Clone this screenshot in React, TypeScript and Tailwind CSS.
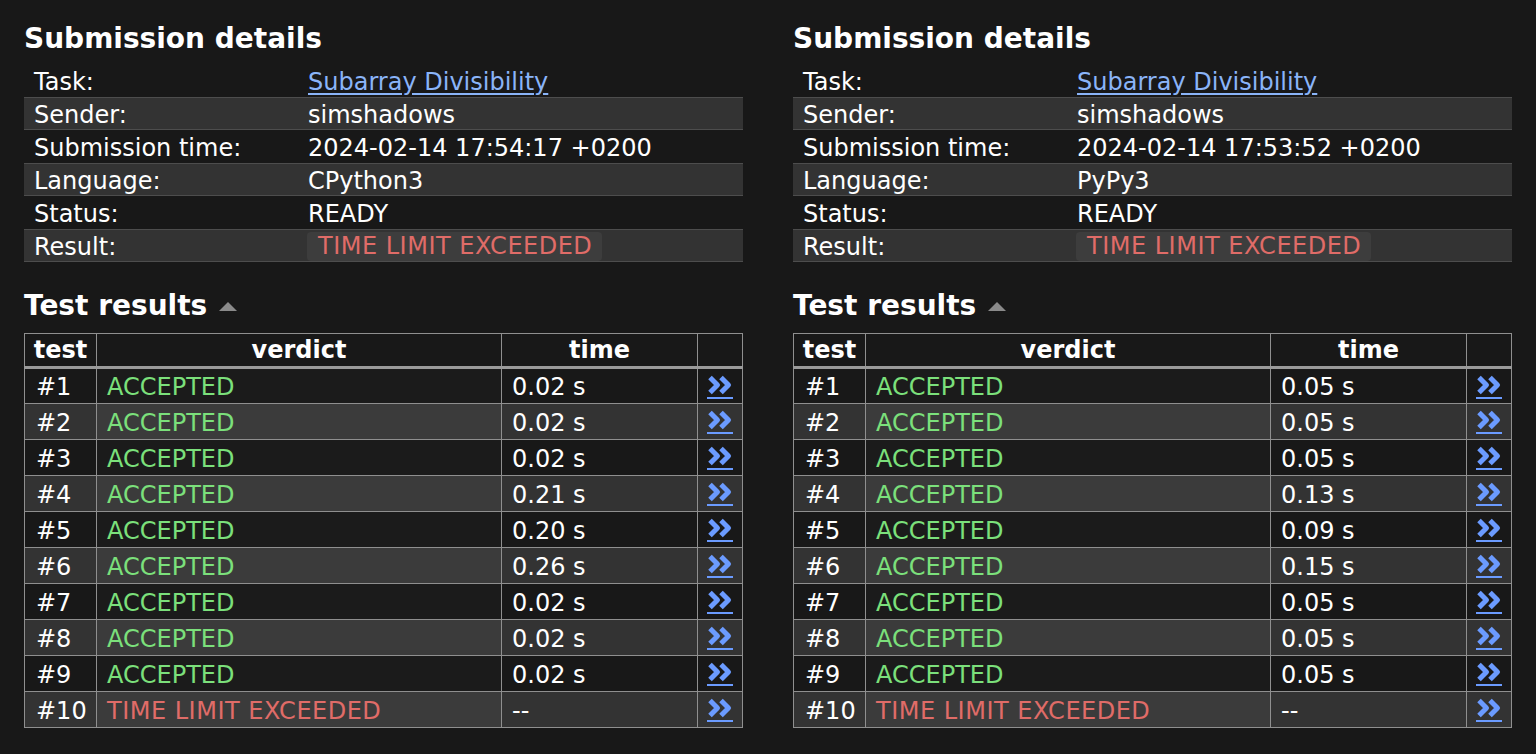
import React from "react";

type Submission = {
  time: string;
  language: string;
  tests: { verdict: string; time: string }[];
};

const ACC = "ACCEPTED";
const TLE = "TIME LIMIT EXCEEDED";

const submissions: Submission[] = [
  {
    time: "2024-02-14 17:54:17 +0200",
    language: "CPython3",
    tests: ["0.02", "0.02", "0.02", "0.21", "0.20", "0.26", "0.02", "0.02", "0.02"]
      .map((t) => ({ verdict: ACC, time: `${t} s` }))
      .concat([{ verdict: TLE, time: "--" }]),
  },
  {
    time: "2024-02-14 17:53:52 +0200",
    language: "PyPy3",
    tests: ["0.05", "0.05", "0.05", "0.13", "0.09", "0.15", "0.05", "0.05", "0.05"]
      .map((t) => ({ verdict: ACC, time: `${t} s` }))
      .concat([{ verdict: TLE, time: "--" }]),
  },
];

function DoubleChevron() {
  return (
    <a className="inline-flex flex-col items-center">
      <svg width="27" height="20" viewBox="0 0 27 20" className="text-[#6b9bff]">
        <path d="M3 2.5 L10.5 10 L3 17.5" fill="none" stroke="currentColor" strokeWidth="5" strokeLinejoin="round" />
        <path d="M14 2.5 L21.5 10 L14 17.5" fill="none" stroke="currentColor" strokeWidth="5" strokeLinejoin="round" />
      </svg>
      <span className="mt-[2px] block h-[2px] w-[26px] bg-[#6b9bff]" />
    </a>
  );
}

function DetailRow({ label, odd, children }: { label: string; odd: boolean; children: React.ReactNode }) {
  return (
    <div
      className={`grid h-[33px] grid-cols-[274px_1fr] items-center pt-[2px] ${
        odd ? "" : "border-y border-[#4d4d4d] bg-[#333333]"
      }`}
    >
      <div className="px-[10px]">{label}</div>
      <div className="px-[10px]">{children}</div>
    </div>
  );
}

function Panel({ s }: { s: Submission }) {
  return (
    <div className="flex-1">
      <h2 className="flex h-[64px] items-center pt-[14px] text-[28px] font-bold">Submission details</h2>
      <div>
        <DetailRow label="Task:" odd>
          <a className="text-[#8ab4f8] underline underline-offset-[3px]">Subarray Divisibility</a>
        </DetailRow>
        <DetailRow label="Sender:" odd={false}>simshadows</DetailRow>
        <DetailRow label="Submission time:" odd>{s.time}</DetailRow>
        <DetailRow label="Language:" odd={false}>{s.language}</DetailRow>
        <DetailRow label="Status:" odd>READY</DetailRow>
        <DetailRow label="Result:" odd={false}>
          <span className="-ml-px inline-block h-[29px] rounded-[4px] bg-[#3d3d3d] pl-[11px] pr-[10px] leading-[29px] tracking-[0.5px] text-[#e06c68]">
            {TLE}
          </span>
        </DetailRow>
      </div>

      <h2 className="mt-[24px] flex h-[40px] items-center text-[28px] font-bold">
        Test results
        <svg width="18" height="10" viewBox="0 0 18 10" className="ml-[12px]">
          <path d="M0 10 L9 1 L18 10 Z" fill="#8a8a8a" />
        </svg>
      </h2>

      <table className="mt-[7px] w-full border-collapse">
        <thead>
          <tr>
            <th className="h-[34px] w-[72px] border border-b-[3px] border-[#8f8f8f] border-b-[#9a9a9a] font-bold">test</th>
            <th className="h-[34px] w-[405px] border border-b-[3px] border-[#8f8f8f] border-b-[#9a9a9a] font-bold">verdict</th>
            <th className="h-[34px] w-[196px] border border-b-[3px] border-[#8f8f8f] border-b-[#9a9a9a] font-bold">time</th>
            <th className="h-[34px] border border-b-[3px] border-[#8f8f8f] border-b-[#9a9a9a]"></th>
          </tr>
        </thead>
        <tbody>
          {s.tests.map((t, i) => {
            const even = i % 2 === 1;
            return (
              <tr key={i} className={`h-[36px] ${even ? "bg-[#333333]" : "bg-[#181818]"}`}>
                <td className="border border-[#8f8f8f] pl-[11px] pt-[2px]">#{i + 1}</td>
                <td
                  className={`border border-[#8f8f8f] pl-[10px] pt-[2px] ${even ? "bg-[#3b3b3b]" : "bg-[#1b1b1b]"} ${
                    t.verdict === ACC ? "text-[#7be07b]" : "tracking-[0.5px] text-[#e06c68]"
                  }`}
                >
                  {t.verdict}
                </td>
                <td className="border border-[#8f8f8f] pl-[10px] pt-[2px]">{t.time}</td>
                <td className="border border-[#8f8f8f] text-center align-middle">
                  <div className="flex justify-center pt-[1px]">
                    <DoubleChevron />
                  </div>
                </td>
              </tr>
            );
          })}
        </tbody>
      </table>
    </div>
  );
}

export default function App() {
  return (
    <div
      className="min-h-screen bg-[#181818] text-[24px] leading-[28px] text-white"
      style={{ fontFamily: '"DejaVu Sans", Verdana, sans-serif' }}
    >
      <div className="flex gap-[50px] px-6">
        {submissions.map((s, i) => (
          <Panel key={i} s={s} />
        ))}
      </div>
    </div>
  );
}
